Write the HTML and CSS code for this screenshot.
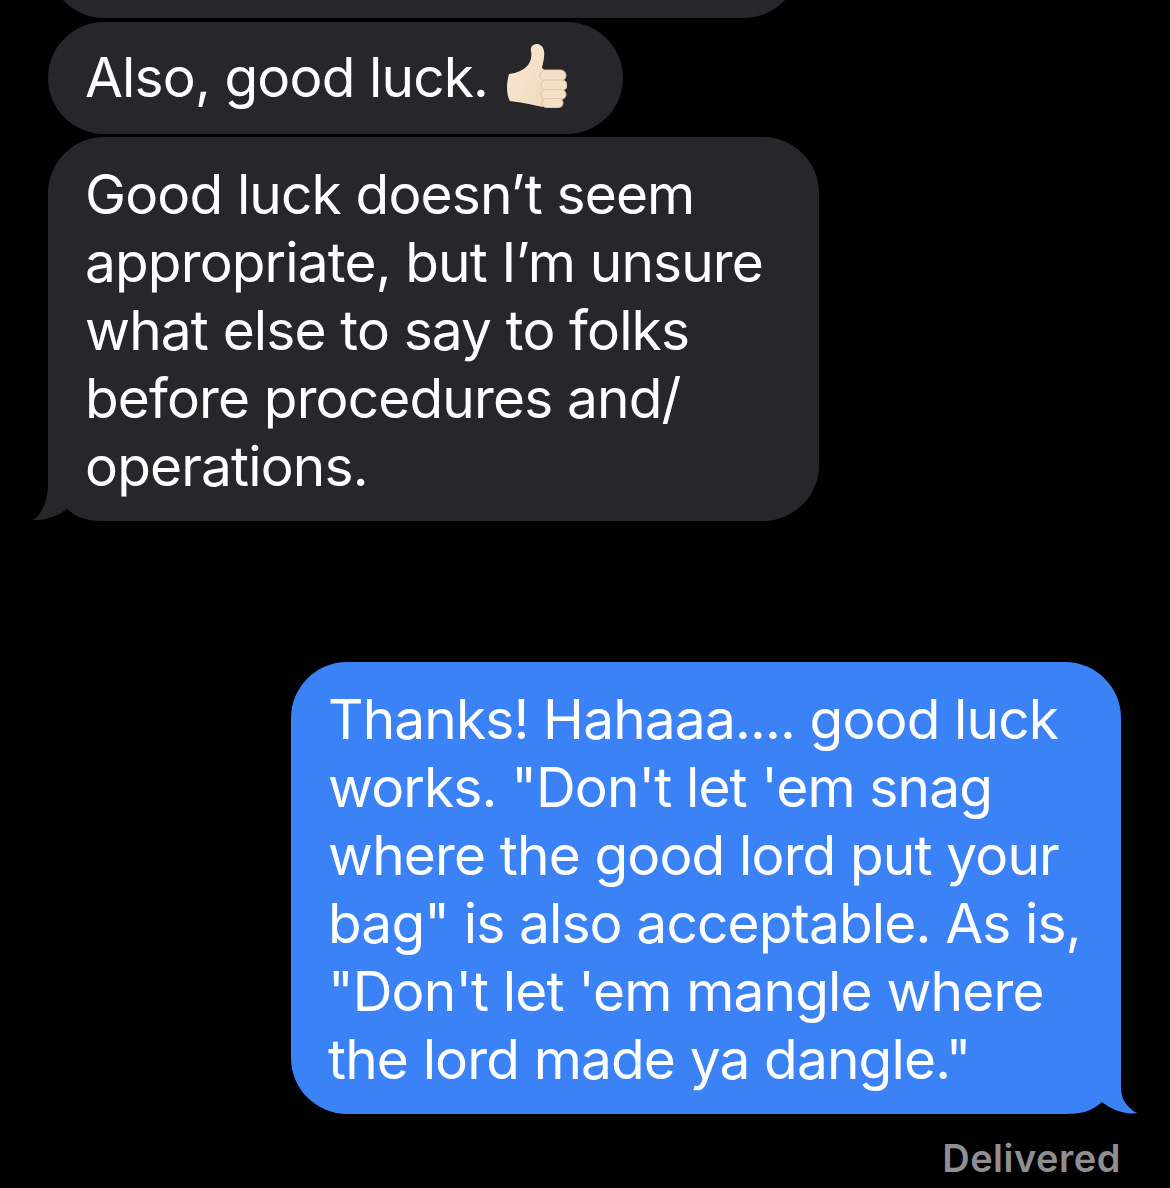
FILE: index.html
```html
<!DOCTYPE html>
<html>
<head>
    <meta charset="UTF-8">
    <meta name="viewport" content="width=device-width, initial-scale=1.0">
    <title>Messages</title>
    <link rel="stylesheet" href="styles.css">
</head>
<body>
    <div class="thread">
        <div class="bubble received clipped"></div>
        <div class="bubble received short">
            Also, good luck.
            <svg class="emoji" width="62" height="66" viewBox="0 0 62 66">
                <defs>
                    <linearGradient id="skin" x1="0" y1="0" x2="1" y2="1">
                        <stop offset="0" stop-color="#fbe9d5"/>
                        <stop offset="1" stop-color="#f0d8be"/>
                    </linearGradient>
                </defs>
                <path fill="url(#skin)" d="M4 31C3 35 2 39 2 44C2 50 3 55 5 58C14 59 24 61 38 64L44 30L37 25C38 20 40 13 39 8C38 3 35 1 32 1C28 1 25 4 26 8C27 13 26 18 23 22C19 27 12 30 4 31Z"/>
                <rect class="finger" x="35" y="27" width="26" height="11" rx="5.5"/>
                <rect class="finger" x="36" y="37" width="26" height="10.5" rx="5"/>
                <rect class="finger" x="36" y="46.5" width="25" height="10" rx="5"/>
                <rect class="finger" x="37" y="55.5" width="21" height="9" rx="4.5"/>
            </svg>
        </div>
        <div class="bubble received tall">
            Good luck doesn’t seem<br>
            appropriate, but I’m unsure<br>
            what else to say to folks<br>
            before procedures and/<br>
            operations.
            <svg class="tail tail-left" width="70" height="60" viewBox="0 0 70 60">
                <path fill="#26262b" d="M16 0L16 20C16 36 10 50 1 56C13 57 26 52 35 45C43 52 52 56.7 66 56.7L66 0Z"/>
            </svg>
        </div>
        <div class="bubble sent">
            Thanks! Hahaaa.... good luck<br>
            works. "Don't let 'em snag<br>
            where the good lord put your<br>
            bag" is also acceptable. As is,<br>
            "Don't let 'em mangle where<br>
            the lord made ya dangle."
            <svg class="tail tail-right" width="70" height="60" viewBox="0 0 70 60">
                <path fill="#3b82f6" d="M53 0L53 30C53 42 58 50 69 56C57 58 44 53 34 45C26 52 17 56.5 4 56.5L4 0Z"/>
            </svg>
        </div>
        <div class="status">Delivered</div>
    </div>
</body>
</html>
```

FILE: styles.css
```css
html {
    background-color: #000;
}

html, body {
    margin: 0;
    padding: 0;
    height: 1188px;
    overflow: hidden;
}

.thread {
    display: flex;
    flex-direction: column;
    align-items: flex-start;
    padding: 0 49px 0 48px;
    font-family: Inter, "Liberation Sans", sans-serif;
    font-size: 55px;
    line-height: 68px;
    letter-spacing: -0.85px;
    color: #fff;
}

.bubble {
    position: relative;
    box-sizing: border-box;
    padding: 23px 37px 21px;
    white-space: nowrap;
}

.received {
    background-color: #26262b;
}

.clipped {
    width: 752px;
    height: 112px;
    margin-top: -94px;
    border-radius: 56px;
}

.short {
    display: flex;
    align-items: center;
    gap: 17px;
    width: 575px;
    height: 112px;
    margin-top: 4px;
    padding-top: 21px;
    padding-bottom: 23px;
    border-radius: 56px;
}

.tall {
    width: 771px;
    height: 384px;
    margin-top: 3px;
    border-radius: 56px;
}

.sent {
    align-self: flex-end;
    width: 830px;
    height: 452px;
    margin-top: 141px;
    border-radius: 56px;
    background-color: #3b82f6;
}

.emoji {
    flex: none;
    margin-top: -3px;
}

.finger {
    fill: #f5dfc7;
    stroke: #dfc5a8;
    stroke-width: 1;
}

/* sits behind the bubble so the text stays on top */
.tail {
    position: absolute;
    bottom: -3px;
    z-index: -1;
}

.tail-left {
    left: -16px;
}

.tail-right {
    right: -17px;
}

.status {
    align-self: flex-end;
    margin-top: 21px;
    font-size: 38px;
    line-height: 46px;
    font-weight: 600;
    letter-spacing: 0.5px;
    color: #8e8e93;
}
```
